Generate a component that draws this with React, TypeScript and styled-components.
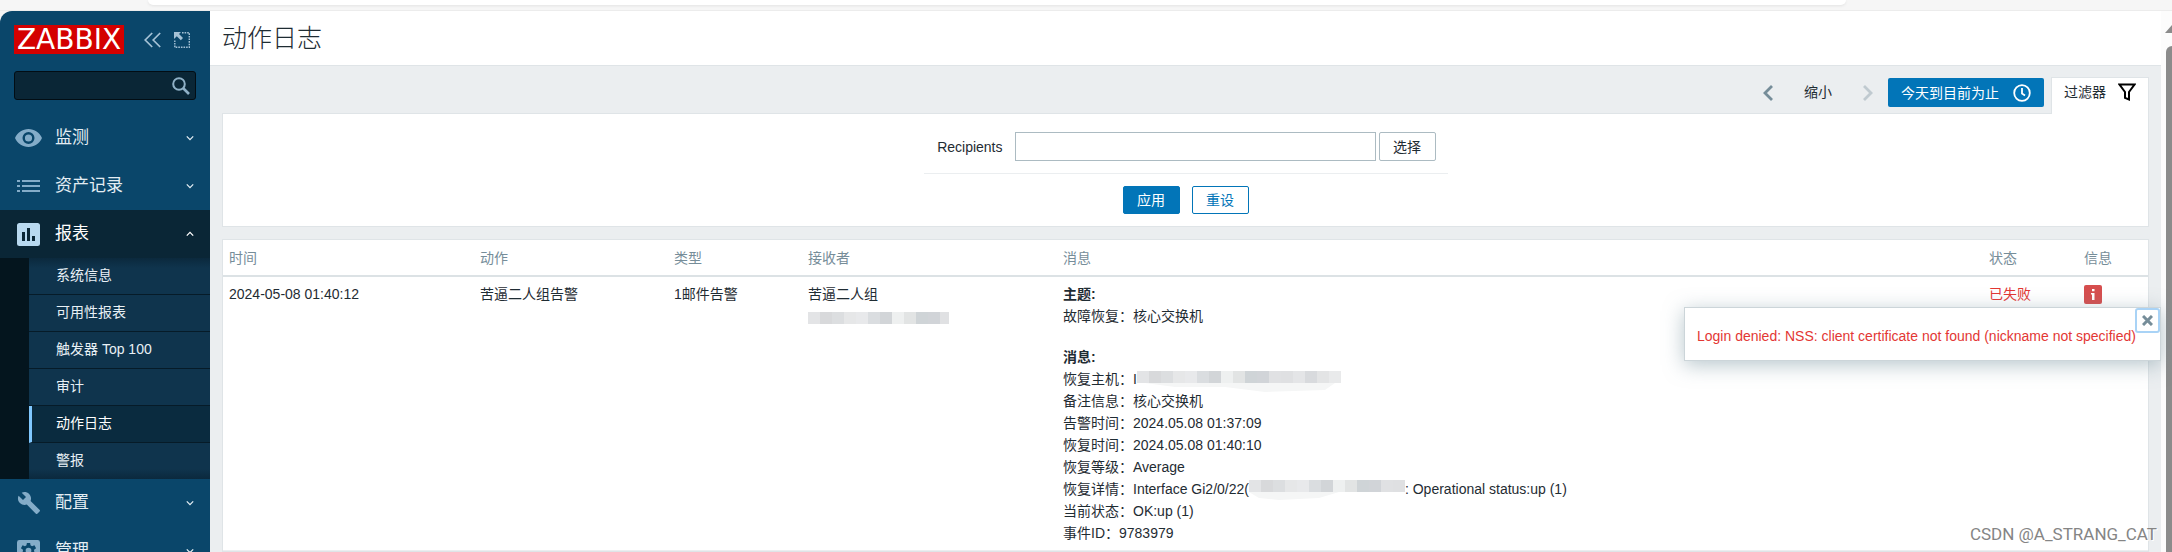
import React from 'react';
import styled, { createGlobalStyle, css } from 'styled-components';

const GlobalStyle = createGlobalStyle`
  *, *::before, *::after { box-sizing: border-box; }
  html, body { margin: 0; height: 100%; overflow: hidden; background: #f5f5f5; }
  body, button, input {
    font-family: "Liberation Sans", "Noto Sans CJK SC", sans-serif;
    font-size: 14px;
    line-height: 22px;
    color: #1f2c33;
  }
  button { margin: 0; padding: 0; border: 0; background: none; cursor: pointer; }
  a { text-decoration: none; }
  svg { display: block; flex: none; }
`;

const Window = styled.div`
  height: 100vh;
  display: flex;
  flex-direction: column;
  overflow: hidden;
`;

const BrowserStrip = styled.div`
  flex: none;
  height: 11px;
  padding: 0 326px 0 148px;
  border-bottom: 1px solid #ececec;
  background: #f6f6f6;
`;

const AddressBar = styled.div`
  height: 5px;
  border-radius: 0 0 14px 14px;
  background: #ffffff;
  box-shadow: 0 1px 3px rgba(0, 0, 0, 0.08);
`;

const Layout = styled.div`
  flex: 1;
  min-height: 0;
  display: flex;
`;

const Sidebar = styled.aside`
  flex: none;
  width: 210px;
  overflow: hidden;
  border-top-left-radius: 12px;
  background: #0a466a;
`;

const SidebarHeader = styled.div`
  display: flex;
  align-items: center;
  padding: 14px 20px 0 14px;
`;

const Logo = styled.a`
  display: flex;
  justify-content: center;
  width: 110px;
  height: 29px;
  margin-right: 20px;
  background: #d40000;
  color: #ffffff;
  font: 28px/29px "DejaVu Sans", sans-serif;
`;

const SidebarButton = styled.button`
  margin-right: 13px;
  color: #a5c2d6;
  &:last-child { margin-right: 0; }
`;

const SearchBox = styled.form`
  display: flex;
  align-items: center;
  height: 29px;
  margin: 17px 14px 14px;
  padding-right: 5px;
  border: 1px solid #020d14;
  border-radius: 3px;
  background: #0a2636;
`;

const SearchInput = styled.input`
  flex: 1;
  min-width: 0;
  padding: 0 6px;
  border: 0;
  outline: 0;
  background: transparent;
  color: #ffffff;
`;

const MenuItem = styled.a<{ $open?: boolean }>`
  display: flex;
  align-items: center;
  height: 48px;
  padding: 0 16px 0 15px;
  background: ${p => (p.$open ? '#0a2636' : 'transparent')};
  color: ${p => (p.$open ? '#ffffff' : '#e3edf3')};
  font-size: 17px;
  line-height: 24px;
`;

const MenuIcon = styled.span<{ $open?: boolean }>`
  display: flex;
  justify-content: center;
  width: 27px;
  margin-right: 13px;
  color: ${p => (p.$open ? '#b8d9f0' : '#84acc8')};
`;

const MenuLabel = styled.span`
  flex: 1;
`;

const Submenu = styled.div`
  padding-left: 29px;
  background: #04151e;
`;

const SubmenuItem = styled.a<{ $active?: boolean }>`
  display: block;
  height: 37px;
  padding-left: ${p => (p.$active ? '24px' : '27px')};
  border-bottom: 1px solid #061b28;
  background: #0f344d;
  color: #e8f0f5;
  line-height: 34px;
  ${p => p.$active && css`
    border-left: 3px solid #80c8ff;
    background: #0a2b3f;
    color: #ffffff;
  `}
  &:first-child { background: linear-gradient(#0b293d, #0f344d 10px); }
  &:last-child {
    height: 36px;
    border-bottom: 0;
    background: linear-gradient(#0f344d 26px, #0b293d);
  }
`;

const Main = styled.main`
  flex: 1;
  min-width: 0;
  display: flex;
  flex-direction: column;
  background: #ebeef0;
`;

const PageHeader = styled.header`
  height: 55px;
  padding: 0 12px;
  border-bottom: 1px solid #dfe4e7;
  background: #ffffff;
`;

const PageTitle = styled.h1`
  margin: 0;
  font-size: 25px;
  font-weight: 300;
  line-height: 54px;
`;

const Content = styled.div`
  padding: 11px 12px 0;
`;

const FilterBar = styled.div`
  display: flex;
  justify-content: flex-end;
  align-items: flex-start;
`;

const TimeNav = styled.div`
  display: flex;
  align-items: center;
  height: 29px;
  margin: 1px 7px 0 0;
`;

const NavArrow = styled.button`
  display: flex;
  color: #768d99;
  &:disabled { color: #c0cad0; }
`;

const ZoomOut = styled.button`
  height: 26px;
  margin: 0 31px;
  padding-bottom: 2px;
`;

const RangeButton = styled.button`
  display: flex;
  align-items: center;
  justify-content: space-between;
  width: 156px;
  height: 29px;
  margin-left: 15px;
  padding: 0 13px;
  border-radius: 2px;
  background: #0275b8;
  color: #ffffff;
`;

const FilterTab = styled.button`
  display: flex;
  align-items: center;
  justify-content: space-between;
  width: 98px;
  height: 37px;
  margin-bottom: -1px;
  padding: 0 12px 8px;
  border: 1px solid #dfe4e7;
  border-bottom: 0;
  background: #ffffff;
  z-index: 1;
`;

const Panel = styled.section`
  position: relative;
  border: 1px solid #dfe4e7;
  background: #ffffff;
`;

const FilterForm = styled.form`
  width: 524px;
  margin: 0 auto;
  padding: 18px 0 12px;
`;

const FieldRow = styled.div`
  display: flex;
  align-items: center;
  padding: 0 12px 12px;
  border-bottom: 1px solid #ebeef0;
`;

const FieldLabel = styled.label`
  width: 79px;
  padding-right: 12px;
  text-align: right;
`;

const TextField = styled.input`
  flex: 1;
  min-width: 0;
  height: 29px;
  margin-right: 3px;
  padding: 0 6px;
  border: 1px solid #acbbc2;
`;

const Button = styled.button<{ $kind: 'plain' | 'primary' | 'outline' }>`
  width: 57px;
  height: ${p => (p.$kind === 'plain' ? '29px' : '28px')};
  border: 1px solid ${p => (p.$kind === 'plain' ? '#acbbc2' : '#0275b8')};
  border-radius: 2px;
  background: ${p => (p.$kind === 'primary' ? '#0275b8' : '#ffffff')};
  color: ${p => ({ plain: '#1f2c33', primary: '#ffffff', outline: '#0275b8' })[p.$kind]};
`;

const FormActions = styled.div`
  display: flex;
  justify-content: center;
  gap: 12px;
  padding-top: 12px;
`;

const TablePanel = styled(Panel)`
  margin-top: 12px;
`;

const LogTable = styled.table`
  width: 100%;
  table-layout: fixed;
  border-collapse: separate;
  border-spacing: 0;
`;

const Column = styled.col<{ $width?: number }>`
  ${p => p.$width && css`width: ${p.$width}px;`}
`;

const HeadCell = styled.th`
  height: 37px;
  padding: 0 6px;
  border-bottom: 2px solid #dce2e5;
  color: #768d99;
  font-weight: 400;
  text-align: left;
`;

const Cell = styled.td`
  padding: 6px;
  border-bottom: 1px solid #ebeef0;
  vertical-align: top;
`;

const MessageBlock = styled.div`
  & + & { margin-top: 19px; }
`;

const Line = styled.div`
  display: flex;
  height: 22px;
  white-space: pre;
`;

const LineTitle = styled.b`
  display: block;
`;

const Failed = styled.span`
  color: #e33734;
`;

const InfoButton = styled.button`
  display: block;
  width: 18px;
  height: 19px;
  margin-top: 2px;
  border-radius: 2px;
  background: #d64e4e;
`;

const HintBox = styled.div`
  position: absolute;
  top: 67px;
  right: -13px;
  min-width: 477px;
  padding: 17px 12px 13px;
  border: 1px solid #ccd5d9;
  background: #ffffff;
  box-shadow: 0 4px 20px rgba(112, 141, 153, 0.5);
  color: #e33734;
`;

const CloseButton = styled.button`
  position: absolute;
  top: 0;
  right: 0;
  display: flex;
  align-items: center;
  justify-content: center;
  width: 25px;
  height: 25px;
  border: 2px solid #a9d3f6;
  border-radius: 3px;
  color: #768d99;
`;

const Scrollbar = styled.div`
  flex: none;
  width: 11px;
  padding: 14px 0 0 4px;
  overflow: hidden;
  background: #fcfcfc;
`;

const ScrollThumb = styled.div`
  width: 12px;
  height: 100%;
  margin: 13px 0 0 1px;
  border-radius: 6px;
  background: #8b8b8b;
`;

const Watermark = styled.div`
  position: absolute;
  right: 15px;
  bottom: 6px;
  color: #858585;
  font: 17px/24px Roboto, sans-serif;
  text-shadow: 1px 1px 0 #ffffff;
`;

const Chevron = ({ up }: { up?: boolean }) => (
  <svg width="8" height="6" viewBox="0 0 8 6" fill="none" stroke="currentColor" strokeWidth="1.3">
    <path d={up ? 'M.8 4.6 4 1.4l3.2 3.2' : 'M.8 1.4 4 4.6l3.2-3.2'} />
  </svg>
);

const ICONS: Record<string, React.ReactNode> = {
  eye: (
    <svg width="27" height="18" viewBox="0 0 27 18" fill="currentColor">
      <path fillRule="evenodd" d="M13.500 0C7.500 0 2.400 3.700 0 9c2.400 5.300 7.500 9 13.500 9S24.600 14.300 27 9C24.600 3.700 19.500 0 13.500 0Zm0 15a6 6 0 1 1 0-12 6 6 0 0 1 0 12Zm0-2.400a3.600 3.600 0 1 0 0-7.200 3.600 3.600 0 0 0 0 7.200Z" />
    </svg>
  ),
  list: (
    <svg width="23" height="14" viewBox="0 0 23 14" fill="currentColor">
      <path d="M0 1h3v2H0zM5 1h18v2H5zM0 6h3v2H0zM5 6h18v2H5zM0 11h3v2H0zM5 11h18v2H5z" />
    </svg>
  ),
  report: (
    <svg width="23" height="23" viewBox="0 0 23 23" fill="currentColor">
      <path fillRule="evenodd" d="M2.500 0h18A2.500 2.500 0 0 1 23 2.500v18a2.500 2.500 0 0 1-2.500 2.500h-18A2.500 2.500 0 0 1 0 20.500v-18A2.500 2.500 0 0 1 2.500 0ZM5 9v9h3V9Zm5-4v13h3V5Zm5 8v5h3v-5Z" />
    </svg>
  ),
  wrench: (
    <svg width="24" height="24" viewBox="0 0 24 24" fill="currentColor">
      <path d="m22.700 19-9.100-9.100c.9-2.300.4-5-1.500-6.900-2-2-5-2.400-7.400-1.300L9 6 6 9 1.600 4.700C.4 7.100.9 10.100 2.900 12.100c1.900 1.900 4.600 2.400 6.900 1.500l9.100 9.100c.4.4 1 .4 1.400 0l2.300-2.300c.5-.4.5-1.100.1-1.400z" />
    </svg>
  ),
  gear: (
    <svg width="23" height="23" viewBox="0 0 24 24" fill="currentColor">
      <path fillRule="evenodd" d="M2.500 0h19A2.500 2.500 0 0 1 24 2.500v19a2.500 2.500 0 0 1-2.500 2.500h-19A2.500 2.500 0 0 1 0 21.500v-19A2.500 2.500 0 0 1 2.500 0Zm7.800 3-.4 2.600-1.600.9-2.500-1-1.700 3 2.100 1.600v1.800L4.100 13.500l1.700 3 2.500-1 1.600.9.400 2.600h3.400l.4-2.600 1.600-.9 2.500 1 1.700-3-2.100-1.600v-1.800l2.100-1.600-1.700-3-2.500 1-1.600-.9L13.700 3Zm1.700 5a3 3 0 1 1 0 6 3 3 0 0 1 0-6Z" />
    </svg>
  ),
};

const MENU = [
  { label: '监测', icon: 'eye' },
  { label: '资产记录', icon: 'list' },
  {
    label: '报表',
    icon: 'report',
    items: ['系统信息', '可用性报表', '触发器 Top 100', '审计', '动作日志', '警报'],
  },
  { label: '配置', icon: 'wrench' },
  { label: '管理', icon: 'gear' },
];

const COLUMNS = [
  { title: '时间', width: 251 },
  { title: '动作', width: 194 },
  { title: '类型', width: 134 },
  { title: '接收者', width: 255 },
  { title: '消息' },
  { title: '状态', width: 95 },
  { title: '信息', width: 70 },
];

const SHADES = ['#e3e4e6', '#d8d9db', '#dcdee0', '#e6e7e8', '#e8e9eb', '#dadde0', '#d2d5d8', '#eef0f0', '#e2e4e4', '#cfd4d7', '#d1d4d8', '#e0e1e3', '#dfe0e2', '#e4e5e7', '#d8dadd', '#e3e4e5', '#e9eaeb', '#f0f0f1'];

/* Pixelated strip that hides a private value. */
const Mosaic = ({ width, top = 0, fringe }: { width: number; top?: number; fringe?: string }) => (
  <svg width={width} height="24" viewBox={`0 0 ${width} 24`} aria-hidden="true">
    {fringe && <path d={fringe} fill="#f5f6f6" />}
    {Array.from({ length: Math.ceil(width / 12) }, (_, i) => (
      <rect key={i} x={i * 12} y={top} width="12" height="12" fill={SHADES[i % SHADES.length]} />
    ))}
  </svg>
);

export default function App() {
  return (
    <Window>
      <GlobalStyle />
      <BrowserStrip><AddressBar /></BrowserStrip>
      <Layout>
        <Sidebar>
          <SidebarHeader>
            <Logo href="#">ZABBIX</Logo>
            <SidebarButton aria-label="Collapse sidebar">
              <svg width="17" height="16" viewBox="0 0 17 16" fill="none" stroke="currentColor" strokeWidth="1.700">
                <path d="M8.200 1 1.200 8l7 7M16.200 1l-7 7 7 7" />
              </svg>
            </SidebarButton>
            <SidebarButton aria-label="Hide sidebar">
              <svg width="16" height="16" viewBox="0 0 16 16" fill="none" stroke="currentColor">
                <path d="M8 .8h7.300v14.500H.8V8" strokeWidth="1.400" strokeDasharray="1.600 1" />
                <path d="M0 0h7L5 2l4 4-2.200 2.200-4-4L0 7z" fill="currentColor" stroke="none" />
              </svg>
            </SidebarButton>
          </SidebarHeader>
          <SearchBox role="search">
            <SearchInput aria-label="Search" />
            <SidebarButton type="submit" aria-label="Search">
              <svg width="18" height="18" viewBox="0 0 18 18" fill="none" stroke="#8fb0c6" strokeWidth="2">
                <circle cx="7" cy="7" r="5.800" />
                <path d="m11 11 6 6" strokeWidth="2.600" />
              </svg>
            </SidebarButton>
          </SearchBox>
          <nav>
            {MENU.map(({ label, icon, items }) => (
              <React.Fragment key={label}>
                <MenuItem href="#" $open={!!items}>
                  <MenuIcon $open={!!items}>{ICONS[icon]}</MenuIcon>
                  <MenuLabel>{label}</MenuLabel>
                  <Chevron up={!!items} />
                </MenuItem>
                {items && (
                  <Submenu>
                    {items.map(item => (
                      <SubmenuItem key={item} href="#" $active={item === '动作日志'}>{item}</SubmenuItem>
                    ))}
                  </Submenu>
                )}
              </React.Fragment>
            ))}
          </nav>
        </Sidebar>
        <Main>
          <PageHeader><PageTitle>动作日志</PageTitle></PageHeader>
          <Content>
            <FilterBar>
              <TimeNav>
                <NavArrow aria-label="Previous period">
                  <svg width="10" height="16" viewBox="0 0 10 16" fill="none" stroke="currentColor" strokeWidth="2.800">
                    <path d="M9 1 2 8l7 7" />
                  </svg>
                </NavArrow>
                <ZoomOut>缩小</ZoomOut>
                <NavArrow aria-label="Next period" disabled>
                  <svg width="10" height="16" viewBox="0 0 10 16" fill="none" stroke="currentColor" strokeWidth="2.800">
                    <path d="m1 1 7 7-7 7" />
                  </svg>
                </NavArrow>
                <RangeButton>
                  今天到目前为止
                  <svg width="18" height="18" viewBox="0 0 18 18" fill="none" stroke="currentColor" strokeWidth="1.800">
                    <circle cx="9" cy="9" r="7.800" />
                    <path d="M9 4v5.500l3 2" />
                  </svg>
                </RangeButton>
              </TimeNav>
              <FilterTab>
                过滤器
                <svg width="18" height="18" viewBox="0 0 18 18" fill="none" stroke="#000000" strokeWidth="2">
                  <path d="M1.500 1.500h15L11 9v7.500L7 14.800V9z" />
                </svg>
              </FilterTab>
            </FilterBar>
            <Panel>
              <FilterForm>
                <FieldRow>
                  <FieldLabel htmlFor="recipients">Recipients</FieldLabel>
                  <TextField id="recipients" />
                  <Button type="button" $kind="plain">选择</Button>
                </FieldRow>
                <FormActions>
                  <Button type="button" $kind="primary">应用</Button>
                  <Button type="button" $kind="outline">重设</Button>
                </FormActions>
              </FilterForm>
            </Panel>
            <TablePanel>
              <LogTable>
                <colgroup>
                  {COLUMNS.map(c => <Column key={c.title} $width={c.width} />)}
                </colgroup>
                <thead>
                  <tr>{COLUMNS.map(c => <HeadCell key={c.title}>{c.title}</HeadCell>)}</tr>
                </thead>
                <tbody>
                  <tr>
                    <Cell>2024-05-08 01:40:12</Cell>
                    <Cell>苦逼二人组告警</Cell>
                    <Cell>1邮件告警</Cell>
                    <Cell>
                      苦逼二人组
                      <Mosaic width={141} top={7} />
                    </Cell>
                    <Cell>
                      <MessageBlock>
                        <LineTitle>主题:</LineTitle>
                        <Line>故障恢复：核心交换机</Line>
                      </MessageBlock>
                      <MessageBlock>
                        <LineTitle>消息:</LineTitle>
                        <Line>恢复主机：I<Mosaic width={204} top={3} fringe="M8 15h190l-10 7-60 2-40-5-50 0z" /></Line>
                        <Line>备注信息：核心交换机</Line>
                        <Line>告警时间：2024.05.08 01:37:09</Line>
                        <Line>恢复时间：2024.05.08 01:40:10</Line>
                        <Line>恢复等级：Average</Line>
                        <Line>恢复详情：Interface Gi2/0/22(<Mosaic width={156} top={2} fringe="M0 14h90l-20 6-40 2-20-2z" />: Operational status:up (1)</Line>
                        <Line>当前状态：OK:up (1)</Line>
                        <Line>事件ID：9783979</Line>
                      </MessageBlock>
                    </Cell>
                    <Cell><Failed>已失败</Failed></Cell>
                    <Cell>
                      <InfoButton aria-label="Show error">
                        <svg width="18" height="19" viewBox="0 0 18 19" fill="#ffffff">
                          <path d="M8 4h2.500v2.200H8zM7 8h3.500v7H8V9.500H7z" />
                        </svg>
                      </InfoButton>
                    </Cell>
                  </tr>
                </tbody>
              </LogTable>
              <HintBox role="dialog">
                Login denied: NSS: client certificate not found (nickname not specified)
                <CloseButton aria-label="Close">
                  <svg width="11" height="11" viewBox="0 0 11 11" fill="none" stroke="currentColor" strokeWidth="3">
                    <path d="m1 1 9 9M10 1l-9 9" />
                  </svg>
                </CloseButton>
              </HintBox>
            </TablePanel>
          </Content>
        </Main>
        <Scrollbar>
          <svg width="14" height="8" viewBox="0 0 14 8" fill="#8b8b8b"><path d="M0 8 7 0l7 8z" /></svg>
          <ScrollThumb />
        </Scrollbar>
      </Layout>
      <Watermark>CSDN @A_STRANG_CAT</Watermark>
    </Window>
  );
}
